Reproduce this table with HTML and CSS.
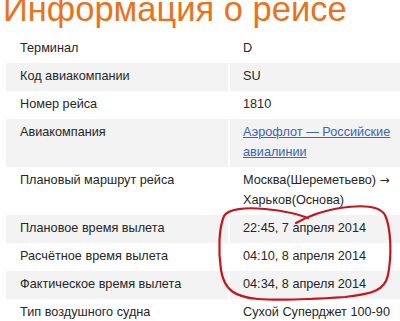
FILE: index.html
```html
<!DOCTYPE html>
<html lang="ru">
<head>
<meta charset="utf-8">
<title>Информация о рейсе</title>
<link rel="stylesheet" href="styles.css">
</head>
<body>
<div class="page">
  <h1 class="title">Информация о рейсе</h1>
  <table class="info">
    <tbody>
      <tr><td class="k">Терминал</td><td class="v">D</td></tr>
      <tr><td class="k">Код авиакомпании</td><td class="v">SU</td></tr>
      <tr><td class="k">Номер рейса</td><td class="v">1810</td></tr>
      <tr><td class="k">Авиакомпания</td><td class="v"><a class="link" href="#">Аэрофлот — Российские авиалинии</a></td></tr>
      <tr><td class="k">Плановый маршрут рейса</td><td class="v">Москва(Шереметьево) <span class="arrow">→</span> Харьков(Основа)</td></tr>
      <tr><td class="k">Плановое время вылета</td><td class="v">22:45, 7 апреля 2014</td></tr>
      <tr><td class="k">Расчётное время вылета</td><td class="v">04:10, 8 апреля 2014</td></tr>
      <tr><td class="k">Фактическое время вылета</td><td class="v">04:34, 8 апреля 2014</td></tr>
      <tr><td class="k">Тип воздушного судна</td><td class="v">Сухой Суперджет 100-90</td></tr>
    </tbody>
  </table>
  <svg class="annot" width="400" height="321" viewBox="0 0 400 321" aria-hidden="true">
    <path d="M296 223 C305 218, 320 211, 340 208 C360 205, 379 205, 385 215 C391 228, 392 255, 388 275 C385 290, 373 294, 345 297 C315 299, 285 301, 258 299 C235 297, 224 290, 221 270 C218 250, 219 228, 224 216 C228 209, 245 207, 265 209 C285 211, 298 214, 308 218" fill="none" stroke="#c8141e" stroke-width="2.2" stroke-linecap="round" stroke-linejoin="round"/>
  </svg>
</div>
</body>
</html>
```

FILE: styles.css
```css
html, body {
  margin: 0;
  padding: 0;
  overflow: hidden;
  background: #ffffff;
}

.page {
  position: relative;
  width: 400px;
  height: 321px;
  overflow: hidden;
  padding-left: 4px;
  box-sizing: border-box;
  font-family: "Liberation Sans", Arial, sans-serif;
  color: #262626;
}

.title {
  margin: -8px 0 9px -1px;
  font-size: 34.5px;
  line-height: 34px;
  font-weight: normal;
  color: #e8731c;
  white-space: nowrap;
}

.info {
  width: 440px;
  table-layout: fixed;
  border-collapse: separate;
  border-spacing: 2px 0;
  font-size: 12.7px;
  line-height: 20px;
}

.info td {
  vertical-align: top;
  padding: 3px 13px 5px 13px;
}

.info .k {
  width: 222px;
  box-sizing: border-box;
  padding-left: 14px;
}

.info tr:nth-child(even) td {
  background: #f3f3f3;
}

.arrow {
  font-family: "DejaVu Sans", sans-serif;
  font-size: 12px;
}

.link {
  color: #3a64b4;
  text-decoration: underline;
}

.annot {
  position: absolute;
  top: 0;
  left: 0;
  pointer-events: none;
}
```
